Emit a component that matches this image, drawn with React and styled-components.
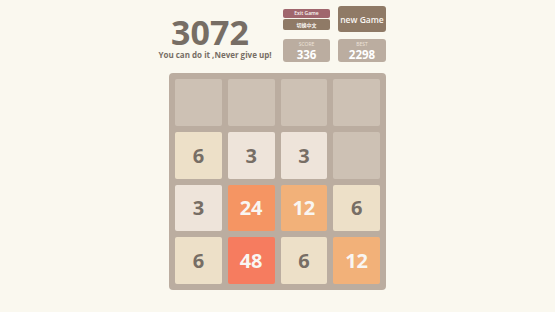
import styled, { createGlobalStyle } from 'styled-components';

const GlobalStyle = createGlobalStyle`
  html, body {
    margin: 0;
    padding: 0;
    background: #faf8ef;
    font-family: "Open Sans", "Noto Sans", "Noto Sans CJK SC", sans-serif;
  }
`;

const board = [
  [0, 0, 0, 0],
  [6, 3, 3, 0],
  [3, 24, 12, 6],
  [6, 48, 6, 12],
];

const tileColors = {
  0: { bg: '#cdc1b4', fg: 'transparent' },
  3: { bg: '#eee4da', fg: '#776e65' },
  6: { bg: '#ede0c8', fg: '#776e65' },
  12: { bg: '#f2b179', fg: '#f9f6f2' },
  24: { bg: '#f59563', fg: '#f9f6f2' },
  48: { bg: '#f67c5f', fg: '#f9f6f2' },
};

const S = {
  Wrapper: styled.div`
    width: 217px;
    margin: 0 auto;
    padding-top: 6px;
  `,
  Header: styled.div`
    display: flex;
    justify-content: space-between;
    height: 56px;
    margin-left: -9px;
  `,
  Heading: styled.div`
    width: 110px;
    display: flex;
    flex-direction: column;
    align-items: center;
    color: #776e65;
    font-weight: 700;
  `,
  Title: styled.h1`
    margin: 9px 10px 0 0;
    font-size: 34px;
    line-height: 34px;
    font-weight: 700;
  `,
  Slogan: styled.p`
    margin: 1px 0 0;
    font-size: 8px;
    line-height: 10px;
    white-space: nowrap;
  `,
  Controls: styled.div`
    display: grid;
    grid-template-columns: 47px 48px;
    grid-template-rows: 26px 23px;
    column-gap: 8px;
    row-gap: 7px;
    align-items: center;
  `,
  Stack: styled.div`
    display: flex;
    flex-direction: column;
    gap: 1px;
  `,
  SmallButton: styled.button`
    border: none;
    padding: 0;
    height: ${(props) => props.$h}px;
    border-radius: 2px;
    background: ${(props) => props.$bg};
    color: #f9f6f2;
    font-family: inherit;
    font-size: 5px;
    font-weight: 600;
  `,
  BigButton: styled.button`
    border: none;
    padding: 0;
    height: 26px;
    border-radius: 3px;
    background: #8f7a66;
    color: #f9f6f2;
    font-family: inherit;
    font-size: 8.5px;
    font-weight: 600;
    white-space: nowrap;
  `,
  ScoreBox: styled.div`
    height: 23px;
    border-radius: 3px;
    background: #bbada0;
    display: flex;
    flex-direction: column;
    align-items: center;
    justify-content: center;
    color: #fff;
  `,
  ScoreLabel: styled.span`
    font-size: 5px;
    line-height: 7px;
    color: #eee4da;
  `,
  ScoreValue: styled.span`
    font-size: 11.5px;
    line-height: 13px;
    font-weight: 700;
  `,
  Board: styled.div`
    margin-top: 11px;
    width: 217px;
    height: 217px;
    box-sizing: border-box;
    padding: 6px;
    border-radius: 4px;
    background: #bbada0;
    display: grid;
    grid-template-columns: repeat(4, 1fr);
    grid-template-rows: repeat(4, 1fr);
    gap: 6px;
  `,
  Tile: styled.div`
    border-radius: 2px;
    background: ${(props) => props.$bg};
    color: ${(props) => props.$fg};
    display: flex;
    align-items: center;
    justify-content: center;
    font-size: 20px;
    font-weight: 700;
  `,
};

export default function App() {
  return (
    <>
      <GlobalStyle />
      <S.Wrapper>
        <S.Header>
          <S.Heading>
            <S.Title>3072</S.Title>
            <S.Slogan>You can do it ,Never give up!</S.Slogan>
          </S.Heading>
          <S.Controls>
            <S.Stack>
              <S.SmallButton $h={9} $bg="#a0666d">
                Exit Game
              </S.SmallButton>
              <S.SmallButton $h={11} $bg="#8f7a66">
                切换中文
              </S.SmallButton>
            </S.Stack>
            <S.BigButton>new Game</S.BigButton>
            <S.ScoreBox>
              <S.ScoreLabel>SCORE</S.ScoreLabel>
              <S.ScoreValue>336</S.ScoreValue>
            </S.ScoreBox>
            <S.ScoreBox>
              <S.ScoreLabel>BEST</S.ScoreLabel>
              <S.ScoreValue>2298</S.ScoreValue>
            </S.ScoreBox>
          </S.Controls>
        </S.Header>
        <S.Board>
          {board.flat().map((value, i) => {
            const { bg, fg } = tileColors[value];
            return (
              <S.Tile key={i} $bg={bg} $fg={fg}>
                {value || ''}
              </S.Tile>
            );
          })}
        </S.Board>
      </S.Wrapper>
    </>
  );
}
